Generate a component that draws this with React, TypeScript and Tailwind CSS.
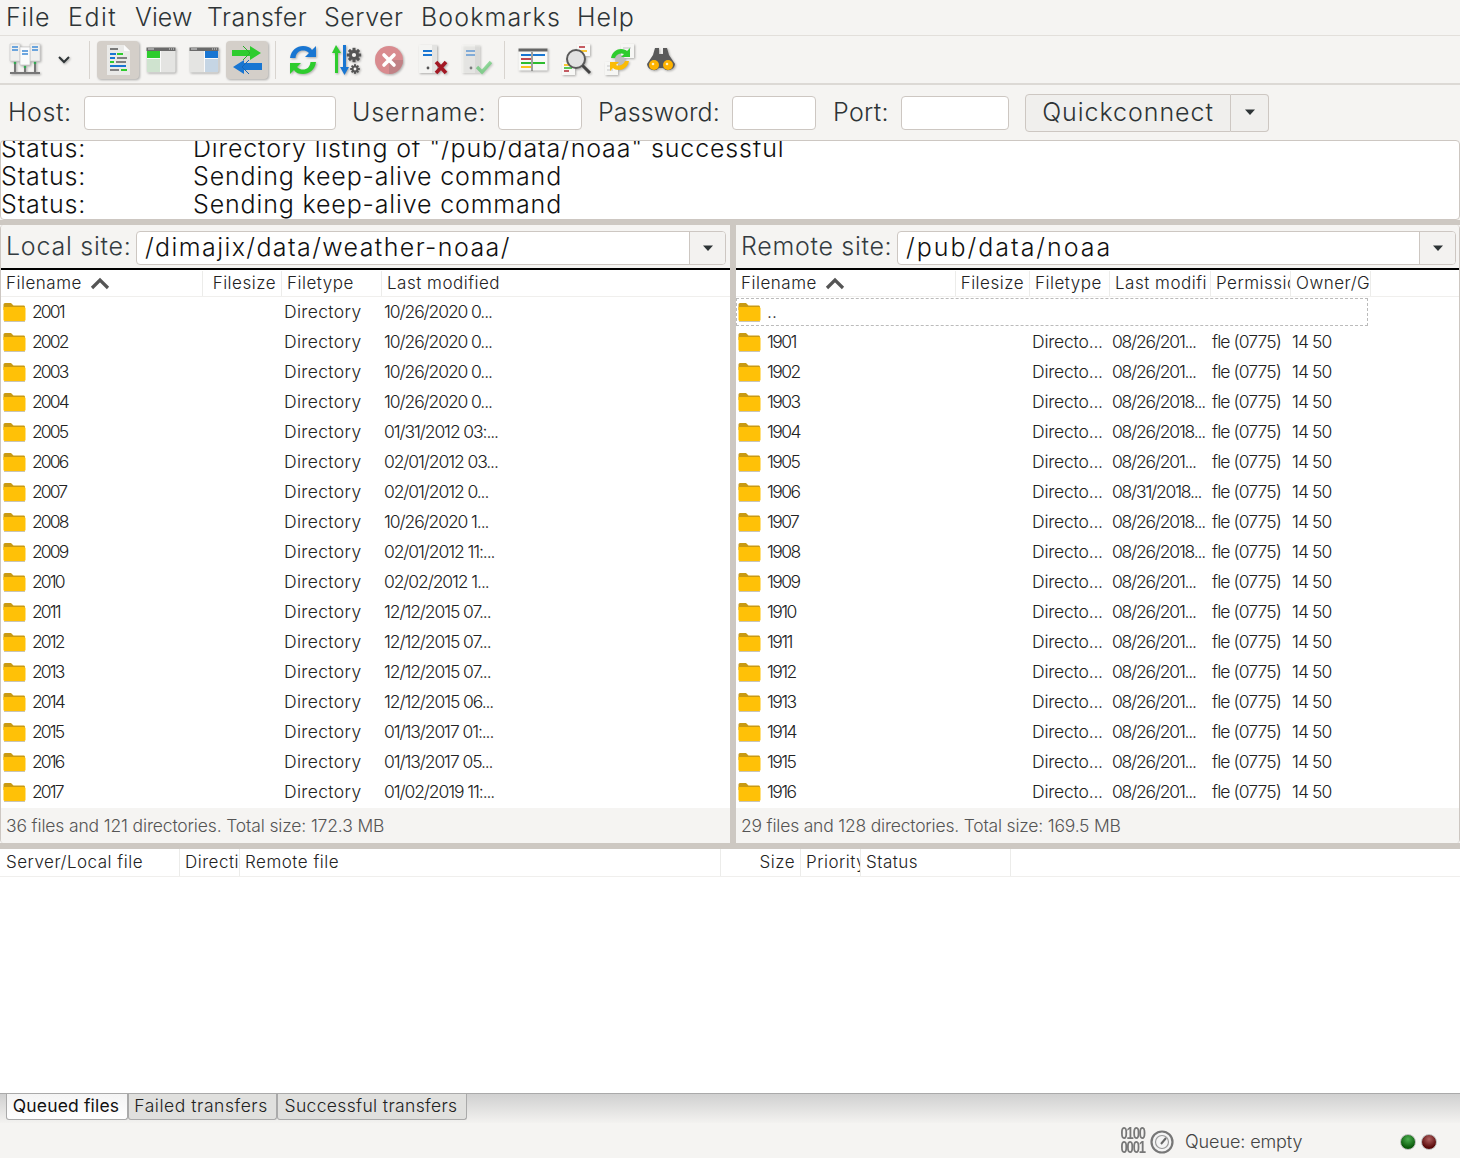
import React from "react";

const Folder = () => (
  <svg width="23" height="20" viewBox="0 0 23 20" className="shrink-0">
    <path d="M0.5 2.5 Q0.5 1 2 1 H8 L10.5 3.5 H21 Q22 3.5 22 5 V8 H0.5Z" fill="#c99a12" />
    <path d="M0.5 5 H21 Q22.5 5 22.5 6.5 V17.5 Q22.5 19 21 19 H2 Q0.5 19 0.5 17.5Z" fill="#ffc107" />
    <path d="M1 19.5 H22" stroke="#c8c4b8" strokeWidth="1" />
  </svg>
);

const SiteManager = () => (
  <svg width="34" height="34" viewBox="0 0 34 34">
    <path d="M2 30H32" stroke="#777" strokeWidth="2" />
    <path d="M7 20V30M17 24V30M27 20V30" stroke="#777" strokeWidth="2" />
    <path d="M2 1H12V18H2Z" fill="#f0f0ee" stroke="#cfcfcf" strokeWidth=".7" />
    <path d="M22 1H32V18H22Z" fill="#f0f0ee" stroke="#cfcfcf" strokeWidth=".7" />
    <path d="M12 4H22V22H12Z" fill="#fbfbfb" stroke="#c4c4c4" strokeWidth=".7" />
    <path d="M4 4H10M4 7H10M14 8H20M14 11H20M24 4H30M24 7H30" stroke="#3f8ad6" strokeWidth="1.3" />
    <circle cx="7" cy="20" r="1.3" fill="#34a853" />
    <circle cx="17" cy="24" r="1.3" fill="#34a853" />
    <circle cx="27" cy="20" r="1.3" fill="#34a853" />
  </svg>
);

const LogIcon = () => (
  <svg width="34" height="34" viewBox="0 0 34 34">
    <path d="M6 2H23L29 8V32H6Z" fill="#eaeae8" />
    <path d="M23 2L29 8H23Z" fill="#fbfbfb" />
    <path d="M9 6H17" stroke="#555" strokeWidth="1.5" />
    <path d="M9 11H15" stroke="#1976d2" strokeWidth="2" />
    <path d="M16 11H22" stroke="#2ecc2e" strokeWidth="2" />
    <path d="M9 15H14" stroke="#1976d2" strokeWidth="2" />
    <path d="M16 15H26" stroke="#666" strokeWidth="1.6" />
    <path d="M9 19H13" stroke="#2ecc2e" strokeWidth="2" />
    <path d="M15 19H25" stroke="#666" strokeWidth="1.6" />
    <path d="M9 23H25" stroke="#1976d2" strokeWidth="2" />
    <path d="M9 27H18" stroke="#666" strokeWidth="1.6" />
    <path d="M20 27H26" stroke="#2ecc2e" strokeWidth="2" />
  </svg>
);

const LocalTree = () => (
  <svg width="30" height="26" viewBox="0 0 30 26">
    <rect x="0.5" y="0.5" width="29" height="25" rx="1.5" fill="#e4e4e2" />
    <rect x="0.5" y="0.5" width="29" height="3.5" fill="#6a6a6a" />
    <path d="M2 2H8" stroke="#ddd" strokeWidth="1" />
    <path d="M23 2H24M25 2H26M27 2H28" stroke="#ddd" strokeWidth="1" />
    <rect x="1" y="4" width="13" height="7" fill="#2ecc2e" />
    <rect x="1" y="12" width="13" height="13" fill="#cfe3cf" />
    <rect x="14" y="4" width="1" height="21" fill="#fafafa" />
    <rect x="1" y="11" width="13" height="1" fill="#fafafa" />
  </svg>
);

const RemoteTree = () => (
  <svg width="30" height="26" viewBox="0 0 30 26">
    <rect x="0.5" y="0.5" width="29" height="25" rx="1.5" fill="#e4e4e2" />
    <rect x="0.5" y="0.5" width="29" height="3.5" fill="#6a6a6a" />
    <path d="M2 2H8" stroke="#ddd" strokeWidth="1" />
    <path d="M23 2H24M25 2H26M27 2H28" stroke="#ddd" strokeWidth="1" />
    <rect x="16" y="4" width="13" height="7" fill="#1976d2" />
    <rect x="16" y="12" width="13" height="13" fill="#c5d5e4" />
    <rect x="15" y="4" width="1" height="21" fill="#fafafa" />
    <rect x="16" y="11" width="13" height="1" fill="#fafafa" />
  </svg>
);

const QueueArrows = () => (
  <svg width="32" height="30" viewBox="0 0 32 30">
    <path d="M1 5H19V1L30 8L19 15V11H1Z" fill="#2ecc2e" />
    <path d="M12 1L19 8L12 15" fill="none" stroke="#27b027" strokeWidth="1" />
    <path d="M31 18H13V15L2 22L13 29V25H31Z" fill="#1976d2" />
    <path d="M18 15L11 22L18 29" fill="none" stroke="#1565b8" strokeWidth="1" />
  </svg>
);

const Refresh = () => (
  <svg width="32" height="32" viewBox="0 0 32 32">
    <path d="M3 14C4 6 10 2 16 2C20 2 23 3 25 6L29 2V13H18L22 9C20 7 18 6.5 16 6.5C12 6.5 9 9 8.5 14Z" fill="#1976d2" />
    <path d="M29 18C28 26 22 30 16 30C12 30 9 29 7 26L3 30V19H14L10 23C12 25 14 25.5 16 25.5C20 25.5 23 23 23.5 18Z" fill="#2ecc2e" />
  </svg>
);

const Gear = ({ x, y, r }: { x: number; y: number; r: number }) => (
  <g transform={`translate(${x},${y})`}>
    {[0, 45, 90, 135].map((a) => (
      <rect key={a} x={-r * 0.25} y={-r * 1.2} width={r * 0.5} height={r * 2.4} fill="#555" transform={`rotate(${a})`} />
    ))}
    <circle r={r * 0.85} fill="#555" />
    <circle r={r * 0.35} fill="#f5f4f2" />
  </g>
);

const Process = () => (
  <svg width="30" height="32" viewBox="0 0 30 32">
    <path d="M4 1L9 9H6V29H3V9H0Z" fill="#2ecc2e" />
    <path d="M11 1H14V23H17L12.5 31L8 23H11Z" fill="#1976d2" />
    <Gear x={22} y={11} r={6} />
    <Gear x={23} y={25} r={4} />
  </svg>
);

const Cancel = () => (
  <svg width="30" height="30" viewBox="0 0 30 30">
    <circle cx="15" cy="15" r="14" fill="#d98b8f" />
    <path d="M15 15H29A14 14 0 0 1 15 29Z" fill="#c08286" />
    <path d="M10 10L20 20M20 10L10 20" stroke="#fff" strokeWidth="3.6" strokeLinecap="round" />
  </svg>
);

const DocMark = ({ kind }: { kind: "x" | "ok" }) => (
  <svg width="32" height="32" viewBox="0 0 32 32" opacity={kind === "ok" ? 0.65 : 1}>
    <path d="M2 1H17L20 4V29H2Z" fill="#f4f4f2" />
    <path d="M15 1H20V29H15Z" fill="#e3e3e1" />
    <path d="M6 7H15M6 11H15" stroke={kind === "x" ? "#1976d2" : "#5c9de0"} strokeWidth="2" />
    <circle cx="11" cy="24" r="1.4" fill="#555" />
    {kind === "x" ? (
      <path d="M19 18L29 29M29 18L19 29" stroke="#a31824" strokeWidth="3.6" />
    ) : (
      <path d="M17 23L22 28L31 18" fill="none" stroke="#5fce6f" strokeWidth="3.4" />
    )}
  </svg>
);

const Filter = () => (
  <svg width="30" height="24" viewBox="0 0 30 24">
    <rect x="0.5" y="0.5" width="29" height="22" fill="#f8f8f6" />
    <rect x="0.5" y="0.5" width="29" height="3" fill="#666" />
    <path d="M3 7H13M15 7H27" stroke="#1976d2" strokeWidth="1.8" />
    <path d="M3 11H13" stroke="#b7333d" strokeWidth="1.8" />
    <path d="M3 15H13M15 15H27" stroke="#2ebd2e" strokeWidth="1.8" />
    <path d="M3 19H13" stroke="#fbbc05" strokeWidth="1.8" />
    <path d="M14 4V23" stroke="#666" strokeWidth="1.2" />
  </svg>
);

const Search = () => (
  <svg width="32" height="32" viewBox="0 0 32 32">
    <rect x="16" y="0" width="13" height="12" fill="#f8f8f6" />
    <path d="M18 3H24" stroke="#b7333d" strokeWidth="1.6" />
    <path d="M18 7H26" stroke="#fbbc05" strokeWidth="1.6" />
    <rect x="1" y="18" width="13" height="13" fill="#f8f8f6" />
    <path d="M3 21H10" stroke="#fbbc05" strokeWidth="1.6" />
    <path d="M3 24H11" stroke="#2ebd2e" strokeWidth="1.6" />
    <path d="M3 27H8" stroke="#b7333d" strokeWidth="1.6" />
    <circle cx="15" cy="15" r="9" fill="#e2e2e2" stroke="#5a5a5a" strokeWidth="2" />
    <path d="M21.5 21.5L29 29" stroke="#444" strokeWidth="3" />
  </svg>
);

const Sync = () => (
  <svg width="32" height="32" viewBox="0 0 32 32">
    <rect x="17" y="0" width="13" height="14" fill="#f6f6f4" />
    <path d="M19 4H27M19 8H25" stroke="#d4d4d4" strokeWidth="1.5" />
    <rect x="1" y="18" width="13" height="13" fill="#f6f6f4" />
    <path d="M3 22H11M3 26H9" stroke="#d4d4d4" strokeWidth="1.5" />
    <circle cx="16" cy="16" r="5" fill="#bdbdbd" />
    <path d="M7 14C8 8 13 5 17 5C20 5 22 6 23 7L26 4V13H17L20 10C18 9 13 9 11 14Z" fill="#2ecc2e" />
    <path d="M25 17C24 23 19 26 15 26C12 26 10 25 9 24L6 27V18H15L12 21C14 22 19 22 21 17Z" fill="#fbbc05" />
  </svg>
);

const Binoculars = () => (
  <svg width="30" height="26" viewBox="0 0 30 26">
    <path d="M9 1H13V7H17V1H21L23 8L29 17A7 7 0 0 1 17 21H13A7 7 0 0 1 1 17L7 8Z" fill="#5a5a5a" />
    <circle cx="8" cy="18" r="5" fill="#ffb300" />
    <circle cx="22" cy="18" r="5" fill="#ffb300" />
    <circle cx="7" cy="17" r="1.3" fill="#fff3c4" />
    <circle cx="21" cy="17" r="1.3" fill="#fff3c4" />
  </svg>
);

const SortUp = () => (
  <svg width="20" height="13" viewBox="0 0 20 13">
    <path d="M2 11L10 3L18 11" fill="none" stroke="#555" strokeWidth="3.2" />
  </svg>
);

const Caret = () => (
  <svg width="12" height="7" viewBox="0 0 12 7">
    <path d="M1 0.5H11L6 6Z" fill="#2e3436" />
  </svg>
);

const Sep = () => <div className="w-px h-[38px] bg-[#d8d4cf]" />;

const TBtn = ({ active, children, className }: { active?: boolean; children: React.ReactNode; className?: string }) => (
  <div className={`h-[38px] rounded-[4px] flex items-center justify-center drop-shadow-[1px_1px_1px_rgba(0,0,0,0.3)] ${active ? "bg-[#d4cfc9]" : ""} ${className ?? "w-[42px]"}`}>{children}</div>
);

const Field = ({ className }: { className: string }) => (
  <div className={`h-[34px] bg-white border border-[#cdc7c2] rounded-[4px] ${className}`} />
);

const Combo = ({ text, className, textClass }: { text: string; className: string; textClass: string }) => (
  <div className={`h-[34px] flex bg-white border border-[#cdc7c2] rounded-[4px] overflow-hidden ${className}`}>
    <div className={`flex-1 pl-[8px] text-[25px] leading-[30px] text-[#111] ${textClass}`}>{text}</div>
    <div className="w-[36px] border-l border-[#cdc7c2] bg-[#f3f2f0] flex items-center justify-center">
      <Caret />
    </div>
  </div>
);

type Col = { label: string; w: string; right?: boolean };

const HeaderCell = ({ col, sort }: { col: Col; sort?: boolean }) => (
  <div className={`${col.w} shrink-0 h-full border-r border-[#ececea] overflow-hidden whitespace-nowrap flex items-center px-[5px] ${col.right ? "justify-end" : ""}`}>
    <span>{col.label}</span>
    {sort && <span className="ml-[8px] flex"><SortUp /></span>}
  </div>
);

const localCols: Col[] = [
  { label: "Filename", w: "w-[202px]" },
  { label: "Filesize", w: "w-[79px]", right: true },
  { label: "Filetype", w: "w-[100px]" },
  { label: "Last modified", w: "w-[349px]" },
];
const remoteCols: Col[] = [
  { label: "Filename", w: "w-[220px]" },
  { label: "Filesize", w: "w-[74px]", right: true },
  { label: "Filetype", w: "w-[80px]" },
  { label: "Last modifi", w: "w-[101px]" },
  { label: "Permissions", w: "w-[80px]" },
  { label: "Owner/Group", w: "w-[80px]" },
];

const localRows: [string, string][] = [
  ["2001", "10/26/2020 0..."],
  ["2002", "10/26/2020 0..."],
  ["2003", "10/26/2020 0..."],
  ["2004", "10/26/2020 0..."],
  ["2005", "01/31/2012 03:..."],
  ["2006", "02/01/2012 03..."],
  ["2007", "02/01/2012 0..."],
  ["2008", "10/26/2020 1..."],
  ["2009", "02/01/2012 11:..."],
  ["2010", "02/02/2012 1..."],
  ["2011", "12/12/2015 07..."],
  ["2012", "12/12/2015 07..."],
  ["2013", "12/12/2015 07..."],
  ["2014", "12/12/2015 06..."],
  ["2015", "01/13/2017 01:..."],
  ["2016", "01/13/2017 05..."],
  ["2017", "01/02/2019 11:..."],
];

const remoteRows: [string, string][] = [
  ["1901", "08/26/201..."],
  ["1902", "08/26/201..."],
  ["1903", "08/26/2018..."],
  ["1904", "08/26/2018..."],
  ["1905", "08/26/201..."],
  ["1906", "08/31/2018..."],
  ["1907", "08/26/2018..."],
  ["1908", "08/26/2018..."],
  ["1909", "08/26/201..."],
  ["1910", "08/26/201..."],
  ["1911", "08/26/201..."],
  ["1912", "08/26/201..."],
  ["1913", "08/26/201..."],
  ["1914", "08/26/201..."],
  ["1915", "08/26/201..."],
  ["1916", "08/26/201..."],
];

const LocalPanel = () => (
  <div className="w-[730px] h-full shrink-0 flex flex-col border-l border-[#cdc7c2] rounded-tl-[4px] rounded-bl-[4px] overflow-hidden">
    <div className="h-[45px] flex items-center pt-[3px] pl-[5px] pr-[4px] bg-[#f5f4f2] border-b-2 border-black">
      <span className="w-[130px] -mt-[2px] text-[25px] text-[#333b40] tracking-[0.75px]">Local site:</span>
      <Combo text="/dimajix/data/weather-noaa/" className="w-[590px]" textClass="tracking-[1.4px]" />
    </div>
    <div className="h-[27px] pt-[1px] flex text-[17px] text-[#222] bg-white border-b border-[#f0efed] tracking-[0.5px]">
      {localCols.map((c, i) => (
        <HeaderCell key={c.label} col={c} sort={i === 0} />
      ))}
    </div>
    <div className="flex-1 bg-white text-[17.5px] text-[#222] overflow-hidden">
      {localRows.map(([n, d]) => (
        <div key={n} className="h-[30px] flex items-center">
          <div className="w-[281px] flex items-center pl-[2px] gap-[6px]">
            <Folder />
            <span className="tracking-[-1.9px]">{n}</span>
          </div>
          <div className="w-[100px] pl-[2px] tracking-[0.35px]">Directory</div>
          <div className="pl-[2px] tracking-[-1.1px]">{d}</div>
        </div>
      ))}
    </div>
    <div className="h-[35px] pt-[1px] bg-[#f5f4f2] flex items-center pl-[5px] text-[17.5px] text-[#555] tracking-[-0.15px]">36 files and 121 directories. Total size: 172.3 MB</div>
  </div>
);

const Row = ({ n, d }: { n: string; d: string }) => (
  <div className="h-[30px] flex items-center">
    <div className="w-[296px] flex items-center pl-[2px] gap-[6px]">
      <Folder />
      <span className="tracking-[-1.6px]">{n}</span>
    </div>
    <div className="w-[80px] tracking-[-0.2px] whitespace-nowrap">Directo...</div>
    <div className="w-[100px] tracking-[-1.2px] whitespace-nowrap">{d}</div>
    <div className="w-[80px] tracking-[-0.9px] whitespace-nowrap">fle (0775)</div>
    <div className="whitespace-nowrap tracking-[-0.9px]">14 50</div>
  </div>
);

const RemotePanel = () => (
  <div className="flex-1 h-full flex flex-col border-r border-[#cdc7c2] rounded-tr-[4px] rounded-br-[4px] overflow-hidden">
    <div className="h-[45px] flex items-center pt-[3px] pl-[5px] pr-[3px] bg-[#f5f4f2] border-b-2 border-black">
      <span className="w-[156px] -mt-[2px] text-[25px] text-[#333b40] tracking-[0.7px] whitespace-nowrap">Remote site:</span>
      <Combo text="/pub/data/noaa" className="w-[559px]" textClass="tracking-[2px]" />
    </div>
    <div className="h-[27px] pt-[1px] flex text-[17px] text-[#222] bg-white border-b border-[#f0efed] tracking-[0.5px]">
      {remoteCols.map((c, i) => (
        <HeaderCell key={c.label} col={c} sort={i === 0} />
      ))}
    </div>
    <div className="flex-1 bg-white text-[17.5px] text-[#222] overflow-hidden">
      <div className="h-[30px] flex items-center">
        <div className="w-[632px] h-[28px] border border-dashed border-[#bbb] flex items-center pl-[1px] gap-[6px]">
          <Folder />
          <span>..</span>
        </div>
      </div>
      {remoteRows.map(([n, d]) => (
        <Row key={n} n={n} d={d} />
      ))}
    </div>
    <div className="h-[35px] pt-[1px] bg-[#f5f4f2] flex items-center pl-[5px] text-[17.5px] text-[#555] tracking-[-0.2px]">29 files and 128 directories. Total size: 169.5 MB</div>
  </div>
);

export default function App() {
  return (
    <div className="w-[1460px] h-[1158px] overflow-hidden flex flex-col bg-[#f5f4f2] [font-family:Inter,sans-serif] font-light text-[#2e3436]">
      {/* menu */}
      <div className="h-[36px] shrink-0 flex items-center border-b border-[#e2dfdb] text-[25px] text-[#2e3436] tracking-[0.35px]">
        <span className="ml-[6px] w-[62px] tracking-[0.9px]">File</span>
        <span className="w-[67px] tracking-[1.5px]">Edit</span>
        <span className="w-[72px] tracking-[0.1px]">View</span>
        <span className="w-[117px] tracking-[0.5px]">Transfer</span>
        <span className="w-[97px] tracking-[0.5px]">Server</span>
        <span className="w-[156px] tracking-[1.1px]">Bookmarks</span>
        <span className="tracking-[1px]">Help</span>
      </div>
      {/* toolbar */}
      <div className="h-[49px] shrink-0 flex items-center pl-[4px] border-b-2 border-[#dcd9d5]">
        <TBtn><SiteManager /></TBtn>
        <TBtn className="w-[36px]">
          <svg width="12" height="8" viewBox="0 0 12 8"><path d="M1 1L6 6L11 1" fill="none" stroke="#2e3436" strokeWidth="2" /></svg>
        </TBtn>
        <div className="w-[15px] flex justify-center"><Sep /></div>
        <TBtn active><LogIcon /></TBtn>
        <TBtn className="w-[42px] ml-[1px]"><LocalTree /></TBtn>
        <TBtn className="w-[42px] ml-[1px]"><RemoteTree /></TBtn>
        <TBtn active className="w-[42px] ml-[1px]"><QueueArrows /></TBtn>
        <div className="w-[14px] flex justify-center"><Sep /></div>
        <TBtn><Refresh /></TBtn>
        <TBtn className="w-[42px] ml-[2px]"><Process /></TBtn>
        <TBtn><Cancel /></TBtn>
        <TBtn className="w-[42px] ml-[2px]"><DocMark kind="x" /></TBtn>
        <TBtn className="w-[42px] ml-[1px]"><DocMark kind="ok" /></TBtn>
        <div className="w-[15px] flex justify-center"><Sep /></div>
        <TBtn><Filter /></TBtn>
        <TBtn className="w-[42px] ml-[2px]"><Search /></TBtn>
        <TBtn className="w-[42px] ml-[1px]"><Sync /></TBtn>
        <TBtn className="w-[42px] -ml-[1px]"><Binoculars /></TBtn>
      </div>
      {/* quickconnect */}
      <div className="h-[55px] shrink-0 flex items-center text-[25px] text-[#2e3436] tracking-[0.35px]">
        <span className="ml-[8px] w-[76px] tracking-[0.6px]">Host:</span>
        <Field className="w-[252px]" />
        <span className="ml-[16px] w-[146px] tracking-[0.85px]">Username:</span>
        <Field className="w-[84px]" />
        <span className="ml-[16px] w-[134px] tracking-[0.15px]">Password:</span>
        <Field className="w-[84px]" />
        <span className="ml-[17px] w-[68px]">Port:</span>
        <Field className="w-[108px]" />
        <div className="ml-[16px] w-[206px] h-[38px] flex items-center justify-center border border-[#cdc7c2] rounded-l-[4px] bg-[#f0efed] tracking-[0.95px]">Quickconnect</div>
        <div className="w-[38px] h-[38px] flex items-center justify-center border border-l-0 border-[#cdc7c2] rounded-r-[4px] bg-[#f0efed]"><Caret /></div>
      </div>
      {/* log */}
      <div className="h-[80px] shrink-0 bg-white border border-[#cdc7c2] rounded-[4px] overflow-hidden flex flex-col justify-end pb-[1px] text-[25px] leading-[28px] text-[#111] tracking-[0.85px]">
        {[
          'Directory listing of "/pub/data/noaa" successful',
          "Sending keep-alive command",
          "Sending keep-alive command",
        ].map((m, i) => (
          <div key={i} className="h-[28px] shrink-0 flex whitespace-nowrap">
            <span className="w-[192px]">Status:</span>
            <span>{m}</span>
          </div>
        ))}
      </div>
      <div className="h-[5px] shrink-0 bg-[#cdc8c2]" />
      {/* panels */}
      <div className="h-[618px] shrink-0 flex">
        <LocalPanel />
        <div className="w-[6px] shrink-0 bg-[#cdc8c2]" />
        <RemotePanel />
      </div>
      <div className="h-[6px] shrink-0 bg-[#cdc8c2]" />
      {/* queue */}
      <div className="h-[244px] shrink-0 bg-white">
        <div className="h-[28px] pl-[1px] flex text-[17px] text-[#222] border-b border-[#f0efed] tracking-[0.5px]">
          <HeaderCell col={{ label: "Server/Local file", w: "w-[179px]" }} />
          <HeaderCell col={{ label: "Direction", w: "w-[60px]" }} />
          <HeaderCell col={{ label: "Remote file", w: "w-[481px]" }} />
          <HeaderCell col={{ label: "Size", w: "w-[80px]", right: true }} />
          <HeaderCell col={{ label: "Priority", w: "w-[60px]" }} />
          <HeaderCell col={{ label: "Status", w: "w-[150px]" }} />
        </div>
      </div>
      {/* tabs */}
      <div className="h-[30px] shrink-0 flex items-start pl-[6px] border-t border-[#aaa] bg-gradient-to-b from-[#d0d0d0] to-[#f3f2f0] text-[17.5px] text-[#222]">
        <div className="w-[122px] h-[26px] pr-[2px] bg-gradient-to-b from-[#f4f4f4] to-white border border-t-0 border-[#aaa] rounded-b-[3px] flex items-center justify-center text-[#111] font-normal tracking-[0.15px]">Queued files</div>
        <div className="w-[149px] h-[26px] pr-[3px] bg-[#e0e0de] border border-t-0 border-[#aaa] rounded-b-[3px] flex items-center justify-center tracking-[0.55px]">Failed transfers</div>
        <div className="w-[190px] h-[26px] pr-[2px] bg-[#e0e0de] border border-t-0 border-[#aaa] rounded-b-[3px] flex items-center justify-center tracking-[0.35px]">Successful transfers</div>
      </div>
      {/* status */}
      <div className="flex-1 flex items-center justify-end pr-[23px] pt-[2px] text-[18px] text-[#444]">
        <div className="-mt-[3px] flex flex-col text-[13px] leading-[11px] font-bold text-[#777] [font-family:'Liberation_Sans',sans-serif] tracking-[-1.1px] scale-y-[1.3]">
          <span>0100</span>
          <span>0001</span>
        </div>
        <svg width="24" height="24" viewBox="0 0 24 24" className="ml-[5px]">
          <circle cx="12" cy="12" r="10.5" fill="#f4f4f4" stroke="#777" strokeWidth="2.2" />
          <circle cx="12" cy="12" r="6.5" fill="none" stroke="#999" strokeWidth="1.2" />
          <path d="M11 14L16 8" stroke="#666" strokeWidth="2" />
        </svg>
        <span className="ml-[11px] w-[215px] tracking-[-0.1px]">Queue: empty</span>
        <span className="w-[16px] h-[16px] rounded-full bg-[radial-gradient(circle_at_50%_30%,#4caf50,#0a5a0a_70%)] border border-[#bbb]" />
        <span className="ml-[5px] w-[16px] h-[16px] rounded-full bg-[radial-gradient(circle_at_50%_30%,#b06060,#5a0a0a_70%)] border border-[#bbb]" />
      </div>
    </div>
  );
}
